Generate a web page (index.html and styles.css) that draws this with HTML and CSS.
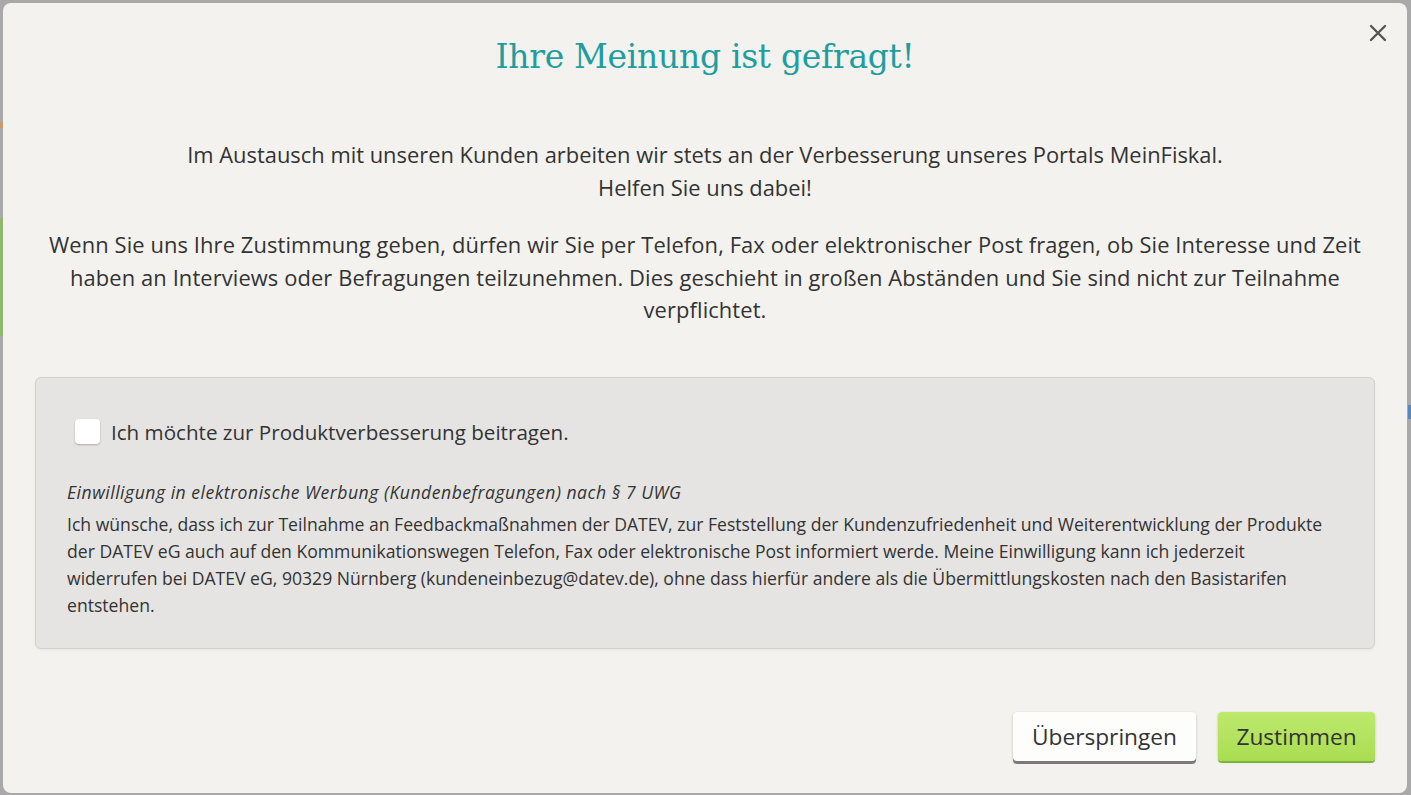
FILE: index.html
```html
<!DOCTYPE html>
<html lang="de">
<head>
<meta charset="utf-8">
<title>Ihre Meinung ist gefragt!</title>
<link rel="stylesheet" href="styles.css">
</head>
<body>
<div class="backdrop">
  <div class="bg-mark bg-orange"></div>
  <div class="bg-mark bg-green"></div>
  <div class="bg-mark bg-blue"></div>
  <div class="modal">
    <button class="close" aria-label="Schließen">
      <svg width="18" height="18" viewBox="0 0 18 18"><path d="M2 2 L16 16 M16 2 L2 16" stroke="#555" stroke-width="2.4" stroke-linecap="round" fill="none"/></svg>
    </button>
    <h1 class="title">Ihre Meinung ist gefragt!</h1>
    <p class="lead">Im Austausch mit unseren Kunden arbeiten wir stets an der Verbesserung unseres Portals MeinFiskal.<br>Helfen Sie uns dabei!</p>
    <p class="lead lead-wide">Wenn Sie uns Ihre Zustimmung geben, dürfen wir Sie per Telefon, Fax oder elektronischer Post fragen, ob Sie Interesse und Zeit<br>haben an Interviews oder Befragungen teilzunehmen. Dies geschieht in großen Abständen und Sie sind nicht zur Teilnahme<br>verpflichtet.</p>
    <div class="panel">
      <label class="check-row">
        <span class="checkbox"></span>
        <span class="check-label">Ich möchte zur Produktverbesserung beitragen.</span>
      </label>
      <p class="legal-head">Einwilligung in elektronische Werbung (Kundenbefragungen) nach § 7 UWG</p>
      <p class="legal">Ich wünsche, dass ich zur Teilnahme an Feedbackmaßnahmen der DATEV, zur Feststellung der Kundenzufriedenheit und Weiterentwicklung der Produkte<br>der DATEV eG auch auf den Kommunikationswegen Telefon, Fax oder elektronische Post informiert werde. Meine Einwilligung kann ich jederzeit<br>widerrufen bei DATEV eG, 90329 Nürnberg (kundeneinbezug@datev.de), ohne dass hierfür andere als die Übermittlungskosten nach den Basistarifen<br>entstehen.</p>
    </div>
    <div class="actions">
      <button class="btn btn-secondary">Überspringen</button>
      <button class="btn btn-primary">Zustimmen</button>
    </div>
  </div>
</div>
</body>
</html>
```

FILE: styles.css
```css
html, body {
  margin: 0;
  padding: 0;
  height: 100%;
  overflow: hidden;
}
body {
  font-family: "Open Sans", "Noto Sans", sans-serif;
  color: #333;
}
.backdrop {
  position: relative;
  width: 1411px;
  height: 795px;
  background: #a9a9a9;
  padding: 3px 0 0 3px;
  box-sizing: border-box;
}
.bg-mark {
  position: absolute;
  width: 3px;
}
.bg-orange { left: 0; top: 122px; height: 6px; background: #c99a6a; }
.bg-green { left: 0; top: 218px; height: 118px; background: #8fb86a; }
.bg-blue { right: 0; top: 405px; height: 14px; background: #5c86b8; }
.modal {
  position: relative;
  width: 1404px;
  height: 790px;
  background: #f3f2ef;
  border-radius: 8px;
  padding: 32px 32px 0 32px;
  box-sizing: border-box;
  display: flex;
  flex-direction: column;
}
.close {
  position: absolute;
  top: 18px;
  right: 17px;
  width: 24px;
  height: 24px;
  padding: 3px;
  border: 0;
  background: transparent;
  cursor: pointer;
}
.title {
  margin: 0;
  font-family: "DejaVu Serif", serif;
  font-weight: normal;
  font-size: 33px;
  line-height: 44px;
  color: #1f9ea0;
  text-align: center;
  letter-spacing: -0.3px;
}
.lead {
  margin: 0;
  font-size: 21.9px;
  line-height: 32.5px;
  text-align: center;
  color: #333;
}
.lead-wide { letter-spacing: 0.1px; }
.title + .lead { margin-top: 60px; }
.lead + .lead { margin-top: 25px; }
.panel {
  margin-top: 50px;
  height: 272px;
  box-sizing: border-box;
  background: #e5e4e2;
  border: 1px solid #d3d2cf;
  border-radius: 6px;
  padding: 41px 31px 0 31px;
  box-shadow: 0 1px 3px rgba(0,0,0,0.06);
}
.check-row {
  display: flex;
  align-items: center;
  gap: 11px;
  margin-left: 8px;
  height: 26px;
}
.checkbox {
  width: 25px;
  height: 25px;
  background: #fff;
  border-radius: 4px;
  box-shadow: 0 1px 2px rgba(0,0,0,0.25);
  flex: none;
}
.check-label {
  font-size: 20.6px;
  color: #333;
}
.legal-head {
  margin: 34px 0 0 0;
  font-style: italic;
  font-size: 17.6px;
  letter-spacing: 0.5px;
  line-height: 27px;
  color: #333;
}
.legal {
  margin: 5px 0 0 0;
  font-size: 17.6px;
  line-height: 27px;
  color: #333;
  white-space: nowrap;
}
.actions {
  display: flex;
  justify-content: flex-end;
  gap: 22px;
  margin-top: 63px;
}
.btn {
  font-family: "Open Sans", "Noto Sans", sans-serif;
  font-size: 22.7px;
  padding: 0;
  border: 0;
  border-radius: 4px;
  color: #333;
  cursor: pointer;
}
.btn-secondary {
  background: #fdfdfc;
  box-shadow: 0 3px 0 #7a7a7a, 0 1px 3px rgba(0,0,0,0.2);
  height: 49px;
  width: 183px;
}
.btn-primary {
  background: linear-gradient(#bde96e, #a9dd51);
  box-shadow: 0 2px 0 #7fb43a, 0 1px 3px rgba(0,0,0,0.2);
  height: 49px;
  width: 157px;
}
```
